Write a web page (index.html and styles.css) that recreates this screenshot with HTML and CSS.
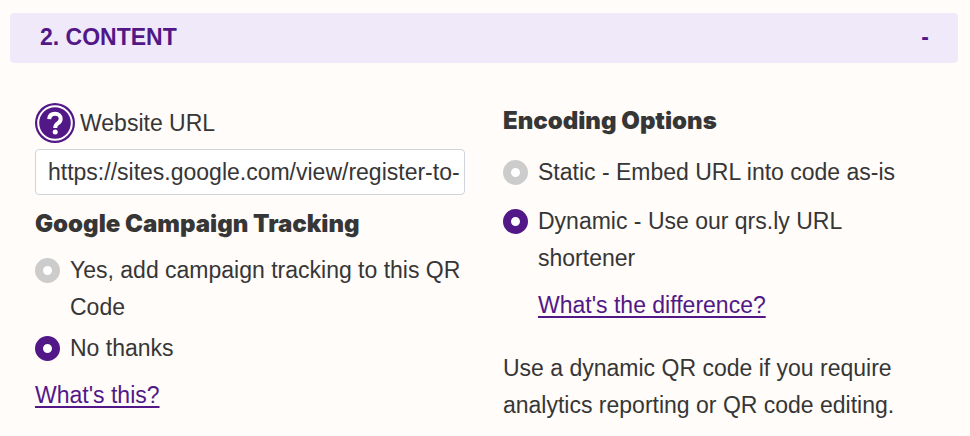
FILE: index.html
```
<!DOCTYPE html>
<html lang="en">
<head>
  <meta charset="UTF-8">
  <meta name="viewport" content="width=device-width, initial-scale=1.0">
  <title>QR Code Content</title>
  <link rel="stylesheet" href="styles.css">
</head>
<body>
  <form class="content-section">
    <button type="button" class="section-header" aria-expanded="true">
      <span>2. CONTENT</span>
      <span>-</span>
    </button>

    <div class="section-body">
      <div class="column">
        <div class="url-label">
          <svg class="help-icon" viewBox="0 0 40 40" aria-hidden="true">
            <circle cx="20" cy="20" r="20" fill="#521887"/>
            <circle cx="20" cy="20" r="16.8" fill="none" stroke="#fff" stroke-width="2"/>
            <path d="M14.2 16.2C14.4 12.6 16.8 10.8 20.1 10.8c3.5 0 5.6 1.9 5.6 4.9 0 2.3-1.2 3.5-2.9 4.7-1.9 1.3-2.6 2.1-2.6 4.6" fill="none" stroke="#fff" stroke-width="4"/>
            <circle cx="20.2" cy="29" r="2.5" fill="#fff"/>
          </svg>
          <label for="websiteUrl">Website URL</label>
        </div>
        <input type="text" id="websiteUrl" class="url-input" value="https://sites.google.com/view/register-to-">

        <h2 class="group-title">Google Campaign Tracking</h2>
        <div class="tracking-options">
          <label class="option">
            <input type="radio" name="tracking" value="yes">
            <span>Yes, add campaign tracking to this QR Code</span>
          </label>
          <label class="option">
            <input type="radio" name="tracking" value="no" checked>
            <span>No thanks</span>
          </label>
        </div>
        <a href="#tracking" class="help-link">What's this?</a>
      </div>

      <div class="column">
        <h2 class="group-title">Encoding Options</h2>
        <div class="encoding-options">
          <label class="option">
            <input type="radio" name="encoding" value="static">
            <span>Static - Embed URL into code as-is</span>
          </label>
          <label class="option">
            <input type="radio" name="encoding" value="dynamic" checked>
            <span>Dynamic - Use our qrs.ly URL shortener</span>
          </label>
        </div>
        <a href="#encoding" class="help-link indented">What's the difference?</a>
        <p class="encoding-note">Use a dynamic QR code if you require analytics reporting or QR code editing.</p>
      </div>
    </div>
  </form>
</body>
</html>
```
FILE: styles.css
```
* {
  margin: 0;
  padding: 0;
  box-sizing: border-box;
}

body {
  background-color: #fffcf9;
  color: #363636;
  font-family: 'Liberation Sans', Arial, sans-serif;
  font-size: 23px;
  line-height: 37px;
}

.content-section {
  padding: 13px 12px 12px 10px;
}

.section-header {
  display: flex;
  justify-content: space-between;
  align-items: center;
  width: 100%;
  height: 50px;
  padding: 0 29px 2px 30px;
  border: none;
  border-radius: 4px;
  background-color: #f0e9fa;
  color: #521887;
  font-family: inherit;
  font-size: 23px;
  font-weight: 700;
  cursor: pointer;
}

.section-body {
  display: grid;
  grid-template-columns: 1fr 1fr;
  gap: 38px;
  padding: 40px 25px 0;
}

.url-label {
  display: flex;
  align-items: center;
  gap: 5px;
  margin-bottom: 6px;
}

.help-icon {
  width: 40px;
  height: 40px;
}

.url-input {
  display: block;
  width: 100%;
  height: 46px;
  margin-bottom: 11px;
  padding: 0 4px 0 12px;
  border: 1px solid #ced4da;
  border-radius: 4px;
  background-color: #fff;
  color: #363636;
  font-family: inherit;
  font-size: 23px;
}

.group-title {
  font-family: 'Arial Black', Inter, sans-serif;
  font-size: 24px;
  font-weight: 900;
  line-height: 36px;
}

.option {
  display: flex;
  align-items: flex-start;
  gap: 10px;
  cursor: pointer;
}

.option input {
  appearance: none;
  flex: none;
  width: 25px;
  height: 25px;
  margin-top: 6px;
  border: 8px solid #ccc;
  border-radius: 50%;
  background-color: #fff;
}

.option input:checked {
  border-color: #521887;
}

.tracking-options {
  display: grid;
  gap: 4px;
  margin: 10px 0;
}

.encoding-options {
  display: grid;
  gap: 12px;
  margin: 15px 0 10px;
}

.help-link {
  color: #521887;
  text-underline-offset: 3px;
}

.indented {
  margin-left: 35px;
}

.encoding-note {
  margin-top: 26px;
}
```
